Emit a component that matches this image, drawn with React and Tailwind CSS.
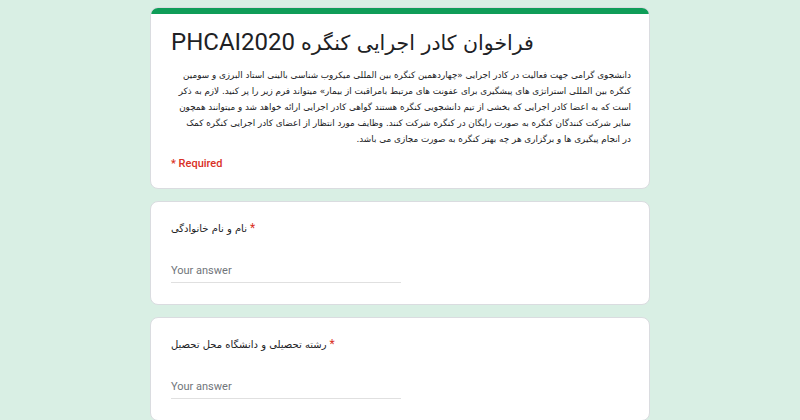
import React from "react";

const fa = "font-['DejaVu_Sans',sans-serif]";

const descLines = [
  "دانشجوی گرامی جهت فعالیت در کادر اجرایی «چهاردهمین کنگره بین المللی میکروب شناسی بالینی استاد البرزی و سومین",
  "کنگره بین المللی استراتژی های پیشگیری برای عفونت های مرتبط بامراقبت از بیمار» میتواند فرم زیر را پر کنید. لازم به ذکر",
  "است که به اعضا کادر اجرایی که بخشی از تیم دانشجویی کنگره هستند گواهی کادر اجرایی ارائه خواهد شد و میتوانند همچون",
  "سایر شرکت کنندگان کنگره به صورت رایگان در کنگره شرکت کنند. وظایف مورد انتظار از اعضای کادر اجرایی کنگره کمک",
  "در انجام پیگیری ها و برگزاری هر چه بهتر کنگره به صورت مجازی می باشد.",
];

function Question({ label }) {
  return (
    <div className="bg-white rounded-lg border border-[#dadce0] px-5 pt-[18px] pb-[21px]">
      <div dir="ltr" className={`${fa} text-[10px] leading-4 text-[#202124]`}>
        {label}
        <span className="text-[#d93025] font-['Roboto',sans-serif] text-[12px]"> *</span>
      </div>
      <div className="mt-[26px] w-[230px] border-b border-[#e0e0e0] pb-[3px]">
        <div className="font-['Roboto',sans-serif] text-[11px] leading-4 text-[#70757a]">Your answer</div>
      </div>
    </div>
  );
}

export default function App() {
  return (
    <div className="w-[800px] h-[420px] overflow-hidden bg-[#d9efe4] pt-[7px]">
      <div className="w-[500px] mx-auto flex flex-col gap-3">
        <div className="bg-white rounded-lg border border-[#dadce0] overflow-hidden">
          <div className="h-[6px] bg-[#0f9d58]" />
          <div className="pl-5 pr-[18px] pt-3 pb-[16px]">
            <div dir="ltr" className="font-['Roboto','DejaVu_Sans',sans-serif] text-[24px] leading-8 text-[#202124]">
              PHCAI2020 <span className={`${fa} text-[20.5px]`}>فراخوان کادر اجرایی کنگره</span>
            </div>
            <div dir="rtl" className={`${fa} mt-2 text-[8.8px] leading-4 text-[#202124] text-right`}>
              {descLines.map((l, i) => (
                <div key={i} className="whitespace-nowrap">{l}</div>
              ))}
            </div>
            <div className="mt-[9px] font-['Roboto',sans-serif] font-medium text-[11px] leading-4 text-[#d93025]">* Required</div>
          </div>
        </div>
        <Question label="نام و نام خانوادگی" />
        <Question label="رشته تحصیلی و دانشگاه محل تحصیل" />
      </div>
    </div>
  );
}
